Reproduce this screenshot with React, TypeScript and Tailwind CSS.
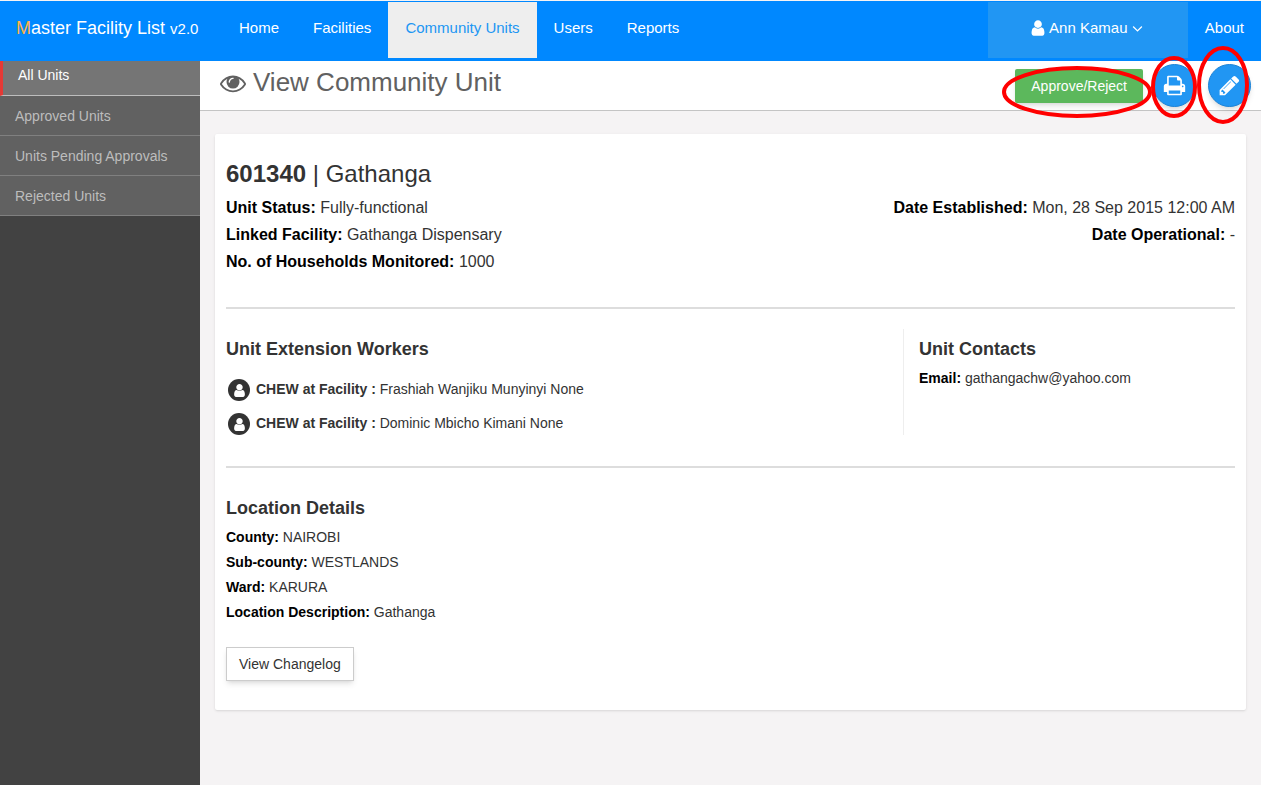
import type { ReactNode } from "react";

const ICONS = {
  eye: "M1664 960q-152-236-381-353 61 104 61 225 0 185-131.5 316.5t-316.5 131.5-316.5-131.5-131.5-316.5q0-121 61-225-229 117-381 353 133 205 333.5 326.5t434.5 121.5 434.5-121.5 333.5-326.5zm-720-384q0-20-14-34t-34-14q-125 0-214.5 89.5t-89.5 214.5q0 20 14 34t34 14 34-14 14-34q0-86 61-147t147-61q20 0 34-14t14-34zm848 384q0 34-20 69-140 230-376.5 368.5t-499.5 138.5-499.5-139-376.5-368q-20-35-20-69t20-69q140-229 376.5-368t499.5-139 499.5 139 376.5 368q20 35 20 69z",
  user: "M1536 1399q0 109-62.5 187t-150.5 78h-854q-88 0-150.5-78t-62.5-187q0-85 8.5-160.5t31.5-152 58.5-131 94-89 134.5-34.5q131 128 313 128t313-128q76 0 134.5 34.5t94 89 58.5 131 31.5 152 8.5 160.5zm-256-887q0 159-112.5 271.5t-271.5 112.5-271.5-112.5-112.5-271.5 112.5-271.5 271.5-112.5 271.5 112.5 112.5 271.5z",
  print: "M448 1536h896v-256h-896v256zm0-640h896v-384h-160q-40 0-68-28t-28-68v-160h-640v640zm1152 64q0-26-19-45t-45-19-45 19-19 45 19 45 45 19 45-19 19-45zm128 0v416q0 13-9.5 22.5t-22.5 9.5h-224v160q0 40-28 68t-68 28h-960q-40 0-68-28t-28-68v-160h-224q-13 0-22.5-9.5t-9.5-22.5v-416q0-79 56.5-135.5t135.5-56.5h64v-544q0-40 28-68t68-28h672q40 0 88 20t76 48l152 152q28 28 48 76t20 88v256h64q79 0 135.5 56.5t56.5 135.5z",
  pencil: "M491 1536l91-91-235-235-91 91v107h128v128h107zm523-928q0-22-22-22-10 0-17 7l-542 542q-7 7-7 17 0 22 22 22 10 0 17-7l542-542q7-7 7-17zm-54-192l416 416-832 832h-416v-416zm683 96q0 53-37 90l-166 166-416-416 166-165q36-38 90-38 53 0 91 38l235 234q37 39 37 91z",
  angleDown: "M1395 736q0 13-10 23l-466 466q-10 10-23 10t-23-10l-466-466q-10-10-10-23t10-23l50-50q10-10 23-10t23 10l393 393 393-393q10-10 23-10t23 10l50 50q10 10 10 23z",
};

function Icon({ name, className }: { name: keyof typeof ICONS; className: string }) {
  return (
    <svg viewBox="0 0 1792 1792" fill="currentColor" aria-hidden="true" className={className}>
      <path d={ICONS[name]} />
    </svg>
  );
}

/* Red ring drawn over a control to call attention to it. */
function Ring({ w, h, className }: { w: number; h: number; className: string }) {
  return (
    <svg width={w} height={h} aria-hidden="true" className={`pointer-events-none absolute z-10 max-w-none ${className}`}>
      <ellipse cx={w / 2} cy={h / 2} rx={w / 2 - 2} ry={h / 2 - 2} fill="none" stroke="#ff0000" strokeWidth="4" />
    </svg>
  );
}

function NavLink({ children, active = false }: { children: ReactNode; active?: boolean }) {
  return (
    <a
      href="#"
      className={`flex h-14 items-center px-[17px] pb-1 ${active ? "bg-[#eeeeee] text-[#2196f3]" : "text-white"}`}
    >
      {children}
    </a>
  );
}

function Field({ label, children }: { label: string; children: ReactNode }) {
  return (
    <div>
      <dt className="inline font-bold text-black">{label}</dt> <dd className="inline">{children}</dd>
    </div>
  );
}

function Worker({ name }: { name: string }) {
  return (
    <li className="flex h-6 items-center">
      <span className="mt-0.5 mr-1.5 ml-0.5 flex size-[22px] shrink-0 items-center justify-center rounded-full bg-[#333333] text-white">
        <Icon name="user" className="size-[15px]" />
      </span>
      <span>
        <b>CHEW at Facility :</b> {name}
      </span>
    </li>
  );
}

const sideLinks = ["Approved Units", "Units Pending Approvals", "Rejected Units"];

export default function App() {
  return (
    <div className="flex min-h-screen flex-col bg-[#f5f3f4] pt-px font-['Liberation_Sans',Arial,sans-serif] text-sm text-[#333333]">
      <header className="flex h-[60px] items-start bg-[#0088ff] pt-px text-[15px] text-white">
        <a href="#" className="flex h-14 w-[222px] shrink-0 items-center pb-1 pl-4 text-lg">
          <span>
            <span className="text-[#ffb347]">M</span>aster Facility List <span className="text-[15px]">v2.0</span>
          </span>
        </a>
        <nav className="flex">
          <NavLink>Home</NavLink>
          <NavLink>Facilities</NavLink>
          <NavLink active>Community Units</NavLink>
          <NavLink>Users</NavLink>
          <NavLink>Reports</NavLink>
        </nav>
        <div className="ml-auto flex">
          <button type="button" className="flex h-14 w-[200px] items-center justify-center gap-0.5 bg-[#2196f3] pb-1">
            <Icon name="user" className="size-[18px]" />
            Ann Kamau
            <Icon name="angleDown" className="size-[17px]" />
          </button>
          <NavLink>About</NavLink>
        </div>
      </header>

      <div className="flex grow">
        <aside className="w-[200px] shrink-0 bg-[#424242]">
          <nav>
            <a
              href="#"
              className="flex h-[35px] items-center border-b border-l-[3px] border-b-[#bdbdbd] border-l-[#e53935] bg-[#757575] pb-1.5 pl-[15px] text-white"
            >
              All Units
            </a>
            {sideLinks.map((label) => (
              <a
                key={label}
                href="#"
                className="flex h-10 items-center border-b border-[#808080] bg-[#616161] px-[15px] text-[#bdbdbd]"
              >
                {label}
              </a>
            ))}
          </nav>
        </aside>

        <div className="min-w-0 grow">
          <div className="flex h-[50px] items-start justify-between border-b border-[#c4c4c4] bg-white pl-5">
            <h1 className="flex h-[43px] items-center gap-[7px] text-[26px] text-[#616161]">
              <Icon name="eye" className="size-[26px]" />
              View Community Unit
            </h1>
            <div className="flex items-start pt-[3px] pr-2.5">
              <div className="relative mt-[5px] mr-[10px]">
                <button type="button" className="h-[34px] rounded-xs bg-[#5cb85c] px-4 text-white shadow-md">
                  Approve/Reject
                </button>
                <Ring w={150} h={52} className="-top-[3px] -left-[13px]" />
              </div>
              <div className="relative mr-3">
                <button
                  type="button"
                  aria-label="Print"
                  className="flex size-[43px] items-center justify-center rounded-full border border-[#1b82d6] bg-[#2196f3] text-white shadow-md"
                >
                  <Icon name="print" className="size-[23px]" />
                </button>
                <Ring w={46} h={62} className="-top-2 -left-0.5" />
              </div>
              <div className="relative">
                <button
                  type="button"
                  aria-label="Edit"
                  className="flex size-[43px] items-center justify-center rounded-full border border-[#1b82d6] bg-[#2196f3] text-white shadow-md"
                >
                  <Icon name="pencil" className="size-[23px]" />
                </button>
                <Ring w={52} h={78} className="-top-[18px] -left-[11px]" />
              </div>
            </div>
          </div>

          <main className="mx-[15px] mt-[23px] mb-6 rounded-xs bg-white px-[11px] pt-6 pb-[29px] shadow-sm">
            <h2 className="text-2xl">
              <b>601340</b> | Gathanga
            </h2>
            <div className="mt-1 flex justify-between text-base leading-[27px]">
              <dl>
                <Field label="Unit Status:">Fully-functional</Field>
                <Field label="Linked Facility:">Gathanga Dispensary</Field>
                <Field label="No. of Households Monitored:">1000</Field>
              </dl>
              <dl className="text-right">
                <Field label="Date Established:">Mon, 28 Sep 2015 12:00 AM</Field>
                <Field label="Date Operational:">-</Field>
              </dl>
            </div>

            <hr className="mt-8 mb-5 border-t-2 border-[#dddddd]" />

            <div className="grid grid-cols-[67.1%_1fr]">
              <section className="pt-2">
                <h3 className="text-lg leading-6 font-bold">Unit Extension Workers</h3>
                <ul className="mt-4 flex flex-col gap-2.5">
                  <Worker name="Frashiah Wanjiku Munyinyi None" />
                  <Worker name="Dominic Mbicho Kimani None" />
                </ul>
              </section>
              <section className="border-l border-[#eeeeee] pt-2 pl-[15px]">
                <h3 className="text-lg leading-6 font-bold">Unit Contacts</h3>
                <dl className="mt-[5px] leading-[25px]">
                  <Field label="Email:">gathangachw@yahoo.com</Field>
                </dl>
              </section>
            </div>

            <hr className="mt-[31px] mb-5 border-t-2 border-[#dddddd]" />

            <section className="pt-2">
              <h3 className="text-lg leading-6 font-bold">Location Details</h3>
              <dl className="mt-[5px] leading-[25px]">
                <Field label="County:">NAIROBI</Field>
                <Field label="Sub-county:">WESTLANDS</Field>
                <Field label="Ward:">KARURA</Field>
                <Field label="Location Description:">Gathanga</Field>
              </dl>
            </section>
            <button type="button" className="mt-[22px] h-[34px] border border-[#cccccc] bg-white px-3 shadow-md">
              View Changelog
            </button>
          </main>
        </div>
      </div>
    </div>
  );
}
